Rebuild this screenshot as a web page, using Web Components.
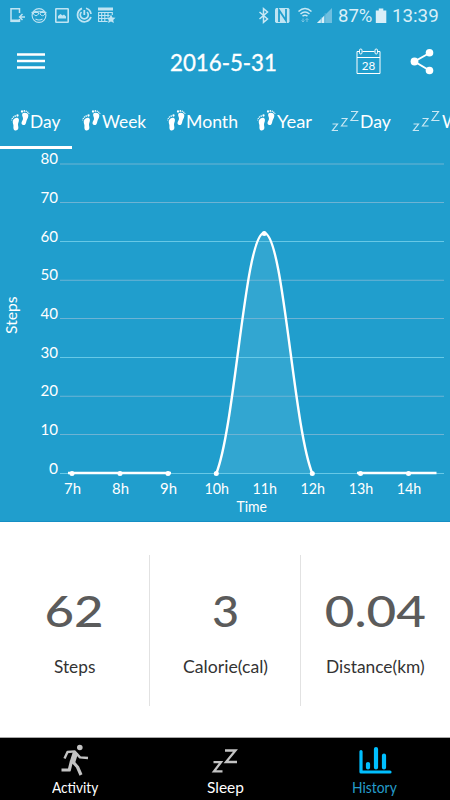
<!DOCTYPE html>
<html lang="en">
<head>
<meta charset="utf-8">
<title>History</title>
<style>
html,body{margin:0;padding:0}
body{width:450px;height:800px;overflow:hidden;background:#fff;font-family:Lato,"Noto Sans",sans-serif}
</style>
</head>
<body>
<history-app></history-app>
<script>
const define = (name, html, after) => customElements.define(name, class extends HTMLElement {
  connectedCallback() {
    if (this.shadowRoot) return;
    this.attachShadow({mode: 'open'}).innerHTML = typeof html === 'function' ? html(this) : html;
    if (after) after(this, this.shadowRoot);
  }
});

/* Text stretched so that its ink spans the width given in "w". */
const ctx = document.createElement('canvas').getContext('2d');
define('fit-text', el => `<style>
  :host{display:block;flex:none;white-space:nowrap}
  span{display:inline-block;transform-origin:0 50%}
</style><span>${el.getAttribute('text')}</span>`, (el, root) => {
  const w = +el.getAttribute('w'), cs = getComputedStyle(el);
  ctx.font = `${cs.fontWeight} ${cs.fontSize} ${cs.fontFamily}`;
  const m = ctx.measureText(el.getAttribute('text'));
  const s = w / (m.actualBoundingBoxLeft + m.actualBoundingBoxRight);
  el.style.width = w + 'px';
  root.querySelector('span').style.transform = `translateX(${m.actualBoundingBoxLeft * s}px) scaleX(${s})`;
});

define('status-bar', `<style>
  :host{display:flex;height:32px;color:#d9eff8;font:19px/32px Roboto,sans-serif}
  svg{display:block;flex:none}
  .gap{flex:1}
  .clock{margin:0 12px 0 5px}
  fit-text{height:32px}
</style>
<svg width="125" height="32" viewBox="0 0 125 32" fill="none" stroke="#bfe4f3" stroke-width="1.4">
  <path d="M19.500 13V8.700h-8.500v12.600h8.500V19" stroke-width="1.500"/><path d="M11 20.800h8.500" stroke-width="2.600"/><path d="M25 17h-5M22.500 14l-3 3 3 3"/>
  <circle cx="39" cy="15.500" r="6.900" stroke-width="1.100"/><path d="M31.500 12.500q7.500-2.500 15 0" stroke-width="1.200"/><path d="M33.500 12.500h5v1.500q-2.500 3.500-5 0zM40 12.500h5v1.500q-2.500 3.500-5 0z" stroke-width="1"/><path d="M35.500 19q3.500 2 7 0" stroke-width="1.100"/>
  <rect x="55.800" y="8.800" width="12.400" height="13.400" rx=".5" stroke-width="1.600"/><path d="M58 18.500v-2.500l2.500-2 2 1.500 1.500-1 2 2v2z" fill="#bfe4f3" stroke="none"/>
  <path d="M82 8.400a6.900 6.900 0 1 0 9 8.600M91 14a6.900 6.900 0 0 0-5-5.700M81.500 12a4 4 0 1 0 5.500 0" stroke-width="1.700"/><path d="M84.300 10v5" stroke-width="1.800"/>
  <path d="M98 9h15" stroke-width="3"/><path d="M98.600 12.500h14M98.600 15.500h11M98.600 18.500h9M98.600 21.500h9M98.600 12v10M101.700 12v10M104.800 12v10M108 12v5M112.300 12v3" stroke-width="1.100"/>
  <path d="M111 14.500l1.400 3 3.100.3-2.300 2.100.7 3.100-2.900-1.600-2.900 1.600.7-3.100-2.300-2.100 3.100-.3z" fill="#bfe4f3" stroke="none"/>
</svg>
<span class="gap"></span>
<svg width="82" height="32" viewBox="257 0 82 32" fill="none" stroke="#c8e8f5">
  <path d="M258.500 12l8 7-4 3.300v-13.600l4 3.300-8 7" stroke-width="1.500"/>
  <path d="M275 8h12.500l1 1.500v12l-1 1.500h-12.500l-1-1.500v-12z" fill="#bfe4f3" stroke="none"/><path d="M278 22v-12l7 10.500V9" stroke="#209ecd" stroke-width="1.800"/>
  <path d="M297.500 11.500q6.500-6 13 0M299.500 14q4.500-4 9 0M301.500 16.200q2.500-2 5 0" stroke-width="1.500"/><path d="M302 18.500v3.500m-1.500-1.500l1.500 1.500 1.500-1.500M306 22v-3.500m-1.500 1.500l1.500-1.500 1.500 1.500" stroke="#78c4e2"/>
  <path d="M331 8v15h-15z" fill="#6ebfdf" stroke="none"/><path d="M323 16v7h-7z" fill="#d9eff8" stroke="none"/><path d="M320.200 17v6M324.200 13v10" stroke="#58b5da" stroke-width=".8"/>
</svg>
<fit-text text="87%" w="33.500" style="margin-left:-1px"></fit-text>
<svg width="16" height="32" viewBox="372 0 16 32"><path d="M375.800 10.500h3V8.500h4.500v2h3v12.500h-10.500z" fill="#d9eff8"/></svg>
<fit-text class="clock" text="13:39" w="45"></fit-text>`);

define('app-header', `<style>
  :host{display:flex;height:60px;align-items:center;color:#fff}
  svg{display:block;flex:none}
  fit-text{font:24px/60px Lato,sans-serif;-webkit-text-stroke:.35px #fff;margin-left:126px;margin-right:80px}
</style>
<svg width="28" height="20" viewBox="0 0 28 20" style="margin-left:17px"><path d="M0 2.500h28M0 9h28M0 15.500h28" stroke="#fff" stroke-width="2.500"/></svg>
<fit-text text="2016-5-31" w="105"></fit-text>
<svg width="25" height="28" viewBox="0 0 25 28" fill="none" stroke="#fff" stroke-width="1" style="margin-right:29px">
  <path d="M3.500 3.500H1v22h23V3.500h-2.500M6.500 3.500h12M1 9.500h23"/><rect x="3.500" y="1" width="2.500" height="5" rx="1.200"/><rect x="19" y="1" width="2.500" height="5" rx="1.200"/>
  <text x="5.700" y="21.500" fill="#fff" stroke="none" font-family="Lato" font-size="12" textLength="13.500" lengthAdjust="spacingAndGlyphs">28</text>
</svg>
<svg width="24" height="28" viewBox="0 0 24 28" fill="#fff"><path d="M19.500 5L4.500 13.500l15 9" fill="none" stroke="#fff" stroke-width="2"/><circle cx="19.500" cy="4.800" r="3.800"/><circle cx="4.500" cy="13.500" r="3.900"/><circle cx="19.500" cy="22.500" r="3.800"/></svg>`);

const feet = `<svg width="20" height="22" viewBox="0 0 20 22" fill="#fff">
  <path d="M2 11.500C3 8.800 7.300 7.500 7.900 10.500c.3 2-1 3.500-.9 5.200.1 1.600.8 2.800.1 4.400-.7 1.700-3.800 1.900-4.500-.2-.4-1.300 0-2.300-.2-3.800C2.100 14.300 1.300 13.400 2 11.500zM11.300 4.800c1.300-1.700 5.700-1.400 6 1.500.2 1.900-.9 3.500-1.600 5-.7 1.700-.4 3-1.500 4.200-1.200 1.200-3.700.5-3.700-1.500 0-1.500 1.300-2.500 1.500-4 .2-2-1.500-3.600-.7-5.200z"/>
  <circle cx="6.500" cy="6.500" r="1.150"/><circle cx="4.200" cy="7" r=".85"/><circle cx="2.500" cy="8" r=".75"/><circle cx="1.300" cy="9.400" r=".65"/><circle cx=".8" cy="11" r=".55"/>
  <circle cx="11" cy="2.500" r="1.150"/><circle cx="13.300" cy="1.900" r=".85"/><circle cx="15.200" cy="2.300" r=".75"/><circle cx="16.800" cy="3.200" r=".7"/><circle cx="17.900" cy="4.600" r=".6"/></svg>`;
const zzz = `<svg width="30" height="22" viewBox="0 0 30 22" fill="none" stroke="#c9e8f4" stroke-width="1.200"><path d="M1.500 15h5L1.500 21.500h5.500M10.500 9.500h5.500L10.500 17h6M20 2.500h6.500L20 11.500h7.500"/></svg>`;
define('history-tab', el => `<style>
  :host{display:flex;flex:none;padding:17px 10px 0;height:37px;border-bottom:3px solid transparent;color:#fff}
  :host([active]){border-color:#fff}
  svg{display:block;overflow:visible;flex:none}
  fit-text{font:18px/24px Lato,sans-serif}
</style>${el.getAttribute('icon') === 'feet' ? feet : zzz}<fit-text text="${el.getAttribute('label')}" w="${el.getAttribute('w')}"></fit-text>`);

define('tab-strip', `<style>:host{display:flex;height:57px;align-items:flex-end;overflow:hidden}
  history-tab[active]{padding-left:11px;padding-right:10.500px}</style>
<history-tab active icon="feet" label="Day" w="30"></history-tab>
<history-tab icon="feet" label="Week" w="45"></history-tab>
<history-tab icon="feet" label="Month" w="50"></history-tab>
<history-tab icon="feet" label="Year" w="35.500"></history-tab>
<history-tab icon="zzz" label="Day" w="30.500" style="padding-left:9px"></history-tab>
<history-tab icon="zzz" label="Week" w="45"></history-tab>`);

define('steps-chart', () => {
  let g = '';
  [164, 202.5, 241.5, 280.3, 318.5, 357.5, 396.3, 434.5, 473.5].forEach((y, i) => {
    const v = 80 - i * 10;
    g += `<path d="M60 ${y}H444" stroke="${v % 30 ? '#6db3d4' : '#67c8e6'}" stroke-width="1.100"/>
    <text x="58" y="${y}" text-anchor="end" textLength="${v ? 17.5 : 9}" lengthAdjust="spacingAndGlyphs">${v}</text>`;
  });
  const xs = [72, 120, 168, 216.3, 264.2, 312.3, 360.5, 408.5];
  xs.forEach((x, i) => {
    g += `<circle cx="${x}" cy="${i === 4 ? 233.5 : 473.5}" r="2.500"/>
    <text x="${x + .5}" y="494" text-anchor="middle" textLength="${i < 3 ? 17 : 24.5}" lengthAdjust="spacingAndGlyphs">${i + 7}h</text>`;
  });
  const curve = 'M216.300 473.500C235.500 425 245 233 264.200 233S293 425 312.300 473.500';
  return `<style>
    :host{display:block;height:372px;border-bottom:1px solid #158fc4}
    svg{display:block}
    text{font:15px Lato,sans-serif}
  </style><svg width="450" height="372" viewBox="0 149 450 372" fill="#fff">
  <path d="${curve}Z" fill="#32a6d1"/>${g}
  <path d="${curve}M68 473H171M357 473H436.500" fill="none" stroke="#fff" stroke-width="2.400"/>
  <text x="236.500" y="512" textLength="30.500" lengthAdjust="spacingAndGlyphs">Time</text>
  <text transform="translate(16.800 334) rotate(-90)" textLength="37.500" lengthAdjust="spacingAndGlyphs">Steps</text></svg>`;
});

define('stat-cell', el => `<style>
  :host{display:flex;flex:1;flex-direction:column;align-items:center;height:151px;box-sizing:border-box;color:#5b5b5b}
  .value{font:500 42px/52px Lato,sans-serif;margin-top:30px}
  .label{font:17px/22px Lato,sans-serif;color:#333;margin-top:19px}
</style><fit-text class="value" text="${el.getAttribute('value')}" w="${el.getAttribute('vw')}"></fit-text>
<fit-text class="label" text="${el.getAttribute('label')}" w="${el.getAttribute('lw')}"></fit-text>`);

define('stats-row', `<style>:host{display:flex;height:215px;padding-top:33px;box-sizing:border-box;background:#fff}
  stat-cell + stat-cell{border-left:1px solid #e2e2e2}</style>
<stat-cell value="62" vw="55" label="Steps" lw="41"></stat-cell>
<stat-cell value="3" vw="24.500" label="Calorie(cal)" lw="84.500"></stat-cell>
<stat-cell value="0.04" vw="99.500" label="Distance(km)" lw="97"></stat-cell>`);

const navIcons = {
  Activity: `<g stroke="#c3c3c3" fill="none" stroke-linejoin="round"><circle cx="19.800" cy="3.500" r="2.800" fill="#c3c3c3" stroke="none"/><path d="M4.500 14.500L7.500 8l7-.6 5.500 6 8 .6" stroke-width="2.400"/><path d="M15.500 8.500L12.500 18" stroke-width="5.500"/><path d="M11.500 17L9.300 26H1.500M13 18l4.500 5 3.500 8" stroke-width="3.200"/></g>`,
  Sleep: `<path d="M3.500 18.200h7.500L4 27.300h8.500M15 6.500h10.500L16 18h11" fill="none" stroke="#c3c3c3" stroke-width="2.300"/>`,
  History: `<path d="M1 7.500V28H30" fill="none" stroke="#00bfff" stroke-width="3.200" stroke-linecap="round" stroke-linejoin="round"/><path d="M8 20v3.500M16 5v18.500M24 11.500v12" stroke="#00bfff" stroke-width="4.200" stroke-linecap="round"/>`
};
define('nav-item', el => `<style>
  :host{display:flex;flex:1;flex-direction:column;align-items:center;padding-top:6px;color:#fff}
  :host([active]){color:#259cca}
  svg{display:block;overflow:visible}
  fit-text{font:15px/20px Lato,sans-serif;margin-top:1px}
</style><svg width="30" height="32" viewBox="0 0 30 32">${navIcons[el.getAttribute('label')]}</svg>
<fit-text text="${el.getAttribute('label')}" w="${el.getAttribute('w')}"></fit-text>`);

define('bottom-nav', `<style>:host{display:flex;height:63px;box-sizing:border-box;background:#000;border-top:1px solid #a8a8a8}</style>
<nav-item label="Activity" w="46.500"></nav-item>
<nav-item label="Sleep" w="36.500"></nav-item>
<nav-item active label="History" w="44"></nav-item>`);

define('history-app', `<style>:host{display:flex;flex-direction:column;width:450px;height:800px;overflow:hidden}
  .top{background:#209ecd}</style>
<div class="top"><status-bar></status-bar><app-header></app-header><tab-strip></tab-strip><steps-chart></steps-chart></div>
<stats-row></stats-row><bottom-nav></bottom-nav>`);
</script>
</body>
</html>
